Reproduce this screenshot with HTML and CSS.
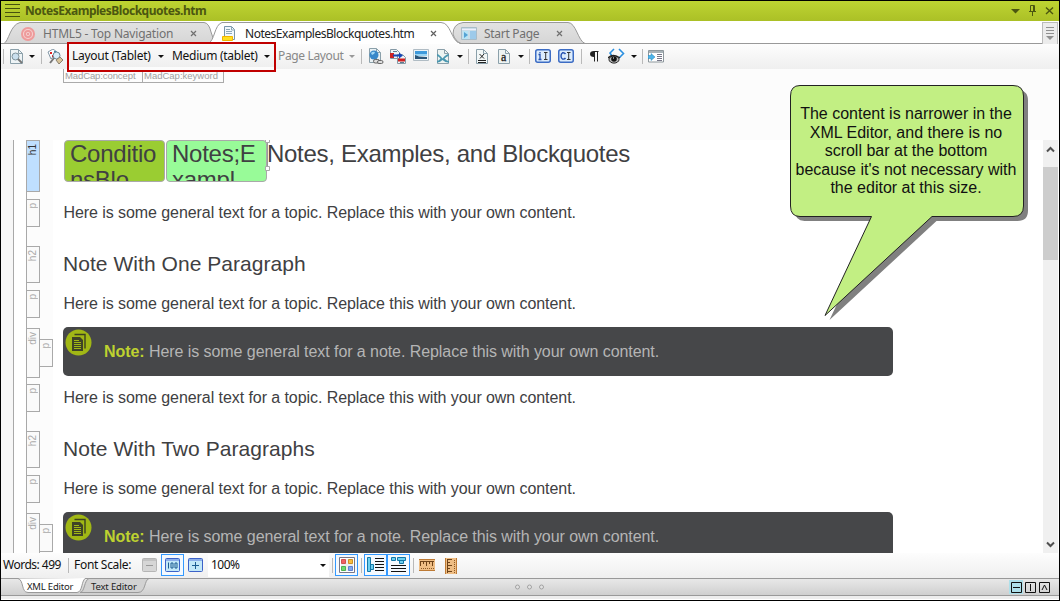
FILE: index.html
```html
<!DOCTYPE html>
<html lang="en">
<head>
<meta charset="utf-8">
<title>NotesExamplesBlockquotes.htm</title>
<link rel="stylesheet" href="styles.css">
</head>
<body>
<div class="window">
  <header class="titlebar">
    <svg class="grip" width="16" height="14"><path d="M0 .5h15M0 4.5h15M0 8.5h15M0 12.5h15" stroke="#46510e"/></svg>
    <span class="title">NotesExamplesBlockquotes.htm</span>
    <svg class="winbtns" width="44" height="14" fill="none" stroke="#4b5610"><path d="M0 5h9l-4.500 4.500z" fill="#4b5610" stroke="none"/><path d="M19.500 7.500V1.500h4v6M18 7.500h7M21.500 8v4M22.500 2v5" /><path d="M35 3.500l7 6.500M42 3.500L35 10" stroke-width="1.400"/></svg>
  </header>

  <nav class="tabs">
    <svg class="tabshapes" width="1058" height="23">
      <defs><linearGradient id="tg" x2="0" y2="1"><stop offset="0" stop-color="#e2e2e2"/><stop offset="1" stop-color="#d6d6d6"/></linearGradient></defs>
      <path d="M3 22.500C8 20 9 4 19 1.500H203Q208 2 210 11L214 22.500z" fill="url(#tg)" stroke="#999"/>
      <path d="M460 22.500Q454 20 452 13Q452 3 462 1.500H567C575 1.500 577 20 584 22.500z" fill="url(#tg)" stroke="#999"/>
      <path d="M0 22.500H207C214 20 213 4 221 1.500H440C450 1.500 450 20 459 22.500H1052" fill="#fff" stroke="#999"/>
      <path d="M208 22.500H458" stroke="#fff"/>
    </svg>
    <div class="tab tab-a">
      <svg width="14" height="14" fill="none" stroke="#ee9b9b" stroke-width="2"><circle cx="7" cy="7" r="6" fill="#f6d3d3"/><circle cx="7" cy="7" r="3"/><circle cx="7" cy="7" r="1" fill="#e98b8b" stroke="none"/></svg>
      <span class="t1">HTML5 - Top Navigation</span>
      <svg class="x" width="7" height="7"><path d="M1 1l5 5M6 1L1 6" stroke="#707070" stroke-width="1.200"/></svg>
    </div>
    <div class="tab tab-b">
      <svg width="14" height="16"><path d="M2.500.5h7l3 3v10h-10z" fill="#f2f8fc" stroke="#7795a8"/><path d="M4 3.500h4M4 5.500h6M4 7.500h6M9.500 1v3h3" stroke="#8ca8b8" fill="none"/><path d="M.5 10.500h10v4H.5z" fill="#ffe020" stroke="#f0b400"/></svg>
      <span class="t2">NotesExamplesBlockquotes.htm</span>
      <svg class="x" width="7" height="7"><path d="M1 1l5 5M6 1L1 6" stroke="#606060" stroke-width="1.200"/></svg>
    </div>
    <div class="tab tab-c">
      <svg width="16" height="13"><path d="M.5.5h15v12H.5z" fill="#cbdde8" stroke="#a9bcc8"/><path d="M1 2.500h14" stroke="#eef"/><path d="M9 4h6v8H9z" fill="#9dcaea"/><path d="M2 4h5v8H2z" fill="#b8e4f5"/><path d="M3 5v6l4-3z" fill="#56a3d4"/></svg>
      <span class="t3">Start Page</span>
      <svg class="x" width="7" height="7"><path d="M1 1l5 5M6 1L1 6" stroke="#707070" stroke-width="1.200"/></svg>
    </div>
    <div class="tablist"><svg width="9" height="14"><path d="M0 .5h8M0 3.500h8M0 6.500h8" stroke="#909090"/><path d="M0 9h8l-4 4z" fill="#909090"/></svg></div>
  </nav>

  <div class="toolbar">
    <i class="sep s1"></i>
    <svg class="ic i-preview" width="14" height="16"><path d="M.5.5h8l4 4v10H.5z" fill="#eef4f6" stroke="#8ba0aa"/><path d="M8.500.5v4h4" fill="none" stroke="#8ba0aa"/><circle cx="5.500" cy="7.500" r="3.500" fill="#c9dfee" stroke="#7e929c"/><path d="M8 10l4 4" stroke="#777" stroke-width="2"/></svg>
    <b class="arr a1"></b>
    <i class="sep s2"></i>
    <svg class="ic i-tags" width="17" height="16"><path d="M1 3l5-3 4 3-6 7z" fill="#fff" stroke="#8296a5"/><path d="M3 3h2v2H3zM5 6h2v2H5z" fill="#d22"/><path d="M7 2h2v3H7z" fill="#48a"/><circle cx="9.500" cy="6.500" r="3.500" fill="#d8edf8" stroke="#6b8798"/><path d="M7 9l-4 5" stroke="#777" stroke-width="2"/><path d="M9 11l4-3 3 3-4 4z" fill="#d8c49a" stroke="#8a8070"/></svg>
    <div class="redbox">
      <span class="l1">Layout (Tablet)</span><b class="arr a2"></b>
      <span class="l2">Medium (tablet)</span><b class="arr a3"></b>
    </div>
    <span class="l3">Page Layout</span><b class="arr dim a4"></b>
    <i class="sep s3"></i>
    <svg class="ic i-link" width="16" height="17"><path d="M1.500.5h7l4 4v10h-11z" fill="#e9f1f4" stroke="#8ba0aa"/><path d="M8.500.5v4h4" fill="none" stroke="#8ba0aa"/><circle cx="6" cy="7" r="4.500" fill="#3787c9"/><path d="M3 5q2-2 4-1 0 2-3 3z" fill="#9fd6f5"/><g fill="#ddd" stroke="#666"><rect x="5.500" y="11.500" width="6" height="3.500" rx="1.700"/><rect x="9.500" y="12.500" width="5.500" height="3" rx="1.500"/></g></svg>
    <svg class="ic i-xref" width="17" height="16"><path d="M.5.5h6l3 3v6h-9zM7.500 5.500h5l3 3v6h-8z" fill="#edf3f6" stroke="#8499a5"/><path d="M0 4h4v5H0z" fill="#c22"/><path d="M3 2.500h4M10 13.500h4" stroke="#5d7c90"/><path d="M3 5.500h6V3.500l4 3-4 3V7.500H3z" fill="#1747b5"/><path d="M8 9.500h7v3H8z" fill="#d02020"/></svg>
    <svg class="ic i-img" width="16" height="12"><path d="M.5.5h15v11H.5z" fill="#eef3f6" stroke="#b0bcc4"/><path d="M2 2h12v3H2z" fill="#3f9adb"/><path d="M2 5h12v2H2z" fill="#9ad4f4"/><path d="M2 6l4 1.500 8 .5v2H2z" fill="#2b5578"/></svg>
    <svg class="ic i-var" width="14" height="16"><path d="M1.500.5h7l4 4v10h-11z" fill="#edf4f2" stroke="#8ba0aa"/><path d="M8.500.5v4h4" fill="none" stroke="#8ba0aa"/><path d="M1 5q2 0 5.500 4.500Q10 5 13 5l-.5 2Q11 7 8.500 9.500 11 12 13 12v1.500Q10 14 6.500 11 3 14 1 13.500V12q2-.5 3.500-2.500Q2.500 7 1 7z" fill="#4a97b0"/></svg>
    <b class="arr a5"></b>
    <i class="sep s4"></i>
    <svg class="ic i-x" width="13" height="16"><path d="M.5.5h7l4 4v10H.5z" fill="#f2f7f7" stroke="#8ba0aa"/><path d="M7.500.5v4h4" fill="none" stroke="#8ba0aa"/><path d="M3.500 5l4.500 4.500M8 5L4 9.500M2 11.500h8M2 13.500h8" stroke="#222"/></svg>
    <svg class="ic i-a" width="13" height="16"><path d="M.5.5h7l4 4v10H.5z" fill="#edf3f3" stroke="#8ba0aa"/><path d="M7.500.5v4h4" fill="none" stroke="#8ba0aa"/><text class="glyph-a" x="3" y="12">a</text></svg>
    <b class="arr a6"></b>
    <i class="sep s5"></i>
    <svg class="ic i-ii" width="16" height="14"><rect x=".75" y=".75" width="14.500" height="12.500" rx="2" fill="#dcecfc" stroke="#3c6cc4" stroke-width="1.500"/><path d="M5 3v1.200M3.500 5.500h1.500v5M3.500 10.500h3" stroke="#2450b0" fill="none" stroke-width="1.300"/><path d="M9 3.500h3.500M10.700 3.500v7M9 10.500h3.500" stroke="#333"/></svg>
    <svg class="ic i-ci" width="16" height="14"><rect x=".75" y=".75" width="14.500" height="12.500" rx="2" fill="#dcecfc" stroke="#3c6cc4" stroke-width="1.500"/><path d="M7.500 5q-1-1.500-3-1.200Q3 4.500 3 7t1.500 3q2 .5 3-1" stroke="#2450b0" stroke-width="1.400" fill="none"/><path d="M9 3.500h3.500M10.700 3.500v7M9 10.500h3.500" stroke="#333"/></svg>
    <i class="sep s6"></i>
    <svg class="ic i-para" width="9" height="11"><path d="M4 6Q0 6 0 3T4 0H8.500V1H8V10.500H7V1H5V10.500H4z" fill="#222"/></svg>
    <svg class="ic i-eye" width="17" height="17"><path d="M6 1L2 5l2 3M11 1l4.500 4.500L11 10" fill="none" stroke="#2a8fe0" stroke-width="1.600"/><path d="M0 10q5-5 12 0" fill="none" stroke="#222" stroke-width="1.300"/><ellipse cx="6" cy="11.500" rx="5" ry="3.600" fill="#bbb" stroke="#222"/><circle cx="6" cy="11" r="2.800" fill="#111"/><path d="M5 10h1" stroke="#fff"/></svg>
    <b class="arr a7"></b>
    <i class="sep s7"></i>
    <svg class="ic i-list" width="16" height="13"><path d="M.5.500h15v11.500H.5z" fill="#fff" stroke="#8d979c"/><path d="M1 2h14" stroke="#a8b2b7" stroke-width="2"/><path d="M9 4.500h5M9 6.500h5M9 8.500h5M9 10.500h5" stroke="#778"/><path d="M0 5.500h3V3.500l4 3.500-4 3.500V8.500H0z" fill="#4db4ea" stroke="#2382b5" stroke-width=".5"/></svg>
  </div>

  <div class="headpane"><span class="mc mc1">MadCap:concept</span><span class="mc mc2">MadCap:keyword</span></div>

  <main class="editor">
    <div class="rail"></div>
    <div class="structure">
      <div class="bar h1bar"><span>h1</span></div>
      <div class="bar pbar after-h"><span>p</span></div>
      <div class="bar hbar"><span>h2</span></div>
      <div class="bar pbar after-h"><span>p</span></div>
      <div class="divrow"><div class="bar dbar"><span>div</span></div><div class="bar pbar nested"><span>p</span></div></div>
      <div class="bar pbar after-d"><span>p</span></div>
      <div class="bar hbar"><span>h2</span></div>
      <div class="bar pbar after-h"><span>p</span></div>
      <div class="divrow"><div class="bar dbar"><span>div</span></div><div class="bar pbar nested"><span>p</span></div></div>
    </div>
    <article class="content">
      <div class="h1row">
        <div class="chip chip1">Conditio<br>nsBlo</div>
        <div class="chip chip2">Notes;E<br>xampl</div>
        <svg class="bracket" width="5" height="31"><path d="M2.500 2v26" stroke="#999"/><path d="M.5-1.500h4v4h-4zM.5 26.500h4v4h-4z" fill="#fff" stroke="#a9a9a9"/></svg>
        <h1>Notes, Examples, and Blockquotes</h1>
      </div>
      <p class="para p1"><span>Here is some general text for a topic. Replace this with your own content.</span></p>
      <h2 class="ha"><span>Note With One Paragraph</span></h2>
      <p class="para p2"><span>Here is some general text for a topic. Replace this with your own content.</span></p>
      <div class="note">
        <svg class="noteicon" width="27" height="27"><circle cx="13.500" cy="13.500" r="13" fill="#a1b715"/><path d="M9.500 5.500h10.500v14" fill="none" stroke="#3c4120" stroke-width="1.400"/><path d="M7 8h8l3 3v11H7z" fill="#3f4326"/><path d="M9 11.500h5M9 13.500h7M9 15.500h7M9 17.500h7M9 19.500h7" stroke="#a1b715"/></svg>
        <p><b>Note:</b> Here is some general text for a note. Replace this with your own content.</p>
      </div>
      <p class="para p3"><span>Here is some general text for a topic. Replace this with your own content.</span></p>
      <h2 class="hb"><span>Note With Two Paragraphs</span></h2>
      <p class="para p2"><span>Here is some general text for a topic. Replace this with your own content.</span></p>
      <div class="note cut">
        <svg class="noteicon" width="27" height="27"><circle cx="13.500" cy="13.500" r="13" fill="#a1b715"/><path d="M9.500 5.500h10.500v14" fill="none" stroke="#3c4120" stroke-width="1.400"/><path d="M7 8h8l3 3v11H7z" fill="#3f4326"/><path d="M9 11.500h5M9 13.500h7M9 15.500h7M9 17.500h7M9 19.500h7" stroke="#a1b715"/></svg>
        <p><b>Note:</b> Here is some general text for a note. Replace this with your own content.</p>
      </div>
    </article>
    <div class="scroll">
      <svg width="9" height="7"><path d="M1 5.500l3.500-3.500 3.500 3.500" fill="none" stroke="#505050" stroke-width="2"/></svg>
      <div class="thumb"></div>
      <svg class="down" width="9" height="7"><path d="M1 1.500l3.500 3.500 3.500-3.500" fill="none" stroke="#505050" stroke-width="2"/></svg>
    </div>
  </main>

  <div class="status">
    <span class="w1">Words: 499</span><i class="sep q1"></i><span class="w2">Font Scale:</span>
    <svg class="q2" width="15" height="14"><rect x=".5" y=".5" width="14" height="13" rx="1" fill="#d6d6d6" stroke="#b5b5b5"/><path d="M1 2h13" stroke="#c2c2c2" stroke-width="2"/><path d="M4 7.500h7" stroke="#999"/></svg>
    <span class="on q3"><svg width="15" height="14"><rect x=".5" y=".5" width="14" height="13" rx="1" fill="#c2e8f8" stroke="#3c62c8"/><path d="M1 2h13" stroke="#8caee8" stroke-width="2"/><path d="M3.500 4.500v6M6 5h2v5H6zM10 5h2v5h-2z" stroke="#1c5c90" fill="none"/></svg></span>
    <svg class="q4" width="15" height="14"><rect x=".5" y=".5" width="14" height="13" rx="1" fill="#c2e8f8" stroke="#3c62c8"/><path d="M1 2h13" stroke="#8caee8" stroke-width="2"/><path d="M4 7.500h7M7.500 4v7" stroke="#1c5c90"/></svg>
    <span class="combo"><span>100%</span><b class="arr"></b></span>
    <i class="sep q5"></i>
    <span class="on q6"><svg width="16" height="16"><path d="M.5.5h15v15H.5z" fill="#fff" stroke="#778"/><path d="M2 2h12v12H2z" fill="#eee"/><path d="M2.500 2.500h4v4h-4z" fill="#f06060" stroke="#d05050"/><path d="M9.500 2.500h4v4h-4z" fill="#f8bd40" stroke="#d09020"/><path d="M2.500 9.500h4v4h-4z" fill="#70d870" stroke="#50b050"/><path d="M9.500 9.500h4v4h-4z" fill="#80a8f0" stroke="#6080d0"/></svg></span>
    <i class="sep q7"></i>
    <span class="on q8"><svg width="18" height="16"><path d="M.5.5h3v14h-3zM3.500 7.500h3v5h-3z" fill="#6fd0f0" stroke="#1378a8"/><path d="M8 1.500h9M8 4.500h9M8 7.500h9M8 10.500h9M8 13.500h9" stroke="#111"/></svg></span>
    <span class="on q9"><svg width="16" height="16"><path d="M.5.5h4v3h-4zM6.500.5h8v3h-8zM8.500 3.500h4v3h-4z" fill="#6fd0f0" stroke="#1378a8"/><path d="M0 8.500h15M0 11.500h15M0 14.500h15" stroke="#111"/></svg></span>
    <i class="sep q10"></i>
    <svg class="q11" width="16" height="12"><path d="M0 0h16v12H0z" fill="#eebd84"/><path d="M0 .5h16M0 11.500h16" stroke="#bd7a35"/><path d="M1.500 3v4M4.500 3v2M7.500 3v4M10.500 3v2M13.500 3v4M1 2.500h14" stroke="#6d4218"/><path d="M2 9.500h13" stroke="#8d5a26" stroke-dasharray="1 1"/></svg>
    <svg class="q12" width="12" height="16"><path d="M0 0h12v16H0z" fill="#eebd84"/><path d="M.5 0v16M11.500 0v16" stroke="#bd7a35"/><path d="M3 1.500h4M3 4.500h2M3 7.500h4M3 10.500h2M3 13.500h4M2.500 1v14" stroke="#6d4218"/><path d="M9.500 2v13" stroke="#8d5a26" stroke-dasharray="1 1"/></svg>
  </div>

  <footer class="foot">
    <svg class="footshapes" width="150" height="18">
      <path d="M79 14.500C84 14 83 2 88 .5H148C143 2 145 14.500 137 14.500z" fill="#d2d2d2" stroke="#999"/>
      <path d="M17 .5C23 2 20 14.500 27 14.500H76C82 14 80 2 85 0" fill="#fff" stroke="#999"/>
    </svg>
    <span class="f1">XML Editor</span><span class="f2">Text Editor</span>
    <svg class="dots" width="30" height="6" fill="#e2e2e2" stroke="#a2a2a2"><circle cx="2.500" cy="3" r="2"/><circle cx="14.500" cy="3" r="2"/><circle cx="26.500" cy="3" r="2"/></svg>
    <svg class="split" width="41" height="14" fill="none" stroke="#111"><path d="M0 0h14v14H0z" fill="#aee0ea" stroke="none"/><path d="M2.500 2.500h10v10h-10zM4 7.500h7M16.500 2.500h10v10h-10zM21.500 4v7M30.500 2.500h10v10h-10zM33 10l2.500-5 2.500 5"/></svg>
  </footer>

  <aside class="callout">
    <svg class="bubble" width="240" height="240">
      <path d="M10 .5H223Q233.500.5 233.500 11V121Q233.500 131.500 223 131.500H142L35 230.500 81.500 131.500H10Q.5 131.500.5 121V11Q.5.5 10 .5z" transform="translate(4.500 4.500)" fill="#808080"/>
      <path d="M10 .5H223Q233.500.5 233.500 11V121Q233.500 131.500 223 131.500H142L35 230.500 81.500 131.500H10Q.5 131.500.5 121V11Q.5.5 10 .5z" fill="#c2ef83" stroke="#222"/>
    </svg>
    <p>The content is narrower in the<br>XML Editor, and there is no<br>scroll bar at the bottom<br>because it's not necessary with<br>the editor at this size.</p>
  </aside>
</div>
</body>
</html>
```

FILE: styles.css
```css
* { box-sizing: border-box; margin: 0; padding: 0; }
body { width: 1060px; height: 601px; overflow: hidden; font-family: "Noto Sans", "Open Sans", sans-serif; }
svg { display: block; flex: none; }
span { white-space: nowrap; }
.window { position: relative; width: 1060px; height: 601px; border: 1px solid #000; display: flex; flex-direction: column; background: #fff; }

.titlebar { height: 20px; flex: none; display: flex; align-items: center; padding-left: 4px; background: linear-gradient(#bed432, #abc026); }
.title { margin-left: 4px; width: 900px; font-size: 12px; font-weight: 700; line-height: 18px; letter-spacing: -.48px; color: #4b5610; padding-bottom: 1px; }
.winbtns { margin-left: auto; margin-right: 4px; }

.tabs { position: relative; height: 23px; flex: none; display: flex; background: #fff; }
.tabshapes { position: absolute; left: 0; top: 0; }
.tab { position: relative; display: flex; align-items: center; font-size: 12px; line-height: 23px; padding-top: 2px; color: #707070; }
.tab-a { width: 205px; padding-left: 20px; }
.tab-b { width: 246px; padding-left: 16px; color: #222; }
.tab-c { width: 120px; padding-left: 9px; }
.t1 { margin-left: 8px; width: 144px; letter-spacing: -.2px; }
.t2 { margin-left: 9px; width: 182px; letter-spacing: -.48px; }
.t3 { margin-left: 7px; width: 69px; letter-spacing: -.3px; }
.x { margin-left: 3px; }
.tablist { margin-left: auto; margin-right: 1px; margin-top: 1px; width: 16px; display: flex; justify-content: center; align-items: center; border: 1px solid #bbb; border-bottom: 0; background: #ececec; position: relative; }

.toolbar { height: 25px; flex: none; display: flex; align-items: center; background: linear-gradient(#fdfdfd, #efefef); font-size: 12px; color: #111; }
.toolbar span { line-height: 16px; padding-bottom: 2px; }
.sep { width: 1px; height: 15px; flex: none; background: #b9b9b9; }
.arr { flex: none; width: 0; height: 0; border: 3px solid transparent; border-top-color: #111; border-bottom: 0; }
.dim { border-top-color: #999; }
.s1 { margin-left: 2px; } .i-preview { margin-left: 6px; } .a1 { margin-left: 5px; } .s2 { margin-left: 6px; }
.i-tags { margin-left: 5px; }
.redbox { margin-left: 3px; width: 209px; height: 30px; flex: none; display: flex; align-items: center; border: 2px solid #c00000; position: relative; padding-left: 3px; background: linear-gradient(#fbfbfb, #efefef 90%, #fcfcfc 90%); z-index: 1; }
.l1 { width: 84px; letter-spacing: -.26px; } .a2 { margin-left: 2px; }
.l2 { margin-left: 8px; width: 88px; letter-spacing: -.28px; } .a3 { margin-left: 4px; }
.l3 { margin-left: 2px; width: 71px; letter-spacing: -.35px; color: #888; } .s3 { margin-left: 6px; }
.i-link { margin-left: 6px; } .i-xref { margin-left: 6px; } .i-img { margin-left: 6px; margin-bottom: 3px; } .i-var { margin-left: 7px; } .a5 { margin-left: 7px; }
.s4 { margin-left: 5px; } .i-x { margin-left: 7px; } .i-a { margin-left: 9px; } .a6 { margin-left: 7px; } .s5 { margin-left: 5px; }
.glyph-a { font: 12px "Liberation Serif", serif; fill: #222; stroke: #222; stroke-width: .3px; }
.i-ii { margin-left: 5px; margin-bottom: 2px; } .i-ci { margin-left: 7px; margin-bottom: 2px; } .s6 { margin-left: 7px; }
.i-para { margin-left: 8px; } .i-eye { margin-left: 9px; } .a7 { margin-left: 6px; } .s7 { margin-left: 5px; } .i-list { margin-left: 5px; }

.headpane { height: 71px; flex: none; display: flex; align-items: flex-start; padding-left: 62px; background: #fcfcfc; }
.mc { height: 14px; border: 1px solid #aaa; border-top: 0; padding: 1px 0 0 1px; font: 9.500px/12px "Liberation Sans", Arial, sans-serif; color: #a0a0a0; }
.mc1 { width: 80px; letter-spacing: -.1px; } .mc2 { width: 82px; border-left: 1px solid #aaa; margin-left: -1px; }

.editor { height: 413px; flex: none; display: flex; overflow: hidden; font-family: "Liberation Sans", Arial, sans-serif; color: #404042; }
.rail { width: 13px; background: #f7f7f7; border-right: 1px solid #a9a9a9; }
.structure { width: 27px; flex: none; margin-left: 12px; border-left: 1px solid #a9a9a9; background: #fcfcfc; }
.bar { width: 14px; margin-left: -1px; border: 1px solid #a9a9a9; background: #fafafa; font-size: 10px; color: #aaa; display: flex; justify-content: center; padding-top: 3px; }
.bar span { writing-mode: vertical-rl; transform: rotate(180deg); line-height: 12px; align-self: flex-start; }
.h1bar { height: 52px; background: #bfdfff; color: #333; }
.pbar { height: 28px; }
.hbar { height: 37px; margin-top: 19px; }
.after-h { margin-top: 7px; }
.after-d { margin-top: 6px; }
.divrow { display: flex; margin-top: 10px; }
.dbar { height: 50px; flex: none; }
.nested { margin-top: 11px; flex: none; }

.content { width: 990px; flex: none; padding-left: 10px; background: #fff; }
.h1row { height: 42px; display: flex; padding-left: 1px; }
.chip { width: 101px; height: 42px; flex: none; overflow: hidden; border: 1px solid #a9a9a9; border-radius: 4px; padding-left: 5px; font-size: 24px; line-height: 27px; letter-spacing: -.25px; }
.chip1 { background: #9acd32; }
.chip2 { background: #98fb98; margin-left: 1px; }
.chip { text-indent: 0; line-height: 26px; }
.bracket { margin-left: -2px; }
h1 { margin-left: -3px; font-size: 24px; line-height: 28px; font-weight: 400; white-space: nowrap; letter-spacing: -.29px; }
.para { font-size: 16px; line-height: 20px; white-space: nowrap; letter-spacing: -.07px; padding-left: .5px; }
.p1 { margin-top: 21px; }
.p2 { margin-top: 18px; }
.p3 { margin-top: 12px; }
h2 { font-size: 21px; line-height: 24px; font-weight: 400; white-space: nowrap; letter-spacing: .05px; }
.ha { margin-top: 29px; }
.hb { margin-top: 29px; }
.note { width: 830px; height: 49px; margin-top: 13px; display: flex; border-radius: 5px; background: #464749; font-size: 16px; letter-spacing: -.065px; color: #b5b5b5; }
.note p { margin-left: 12px; line-height: 49px; white-space: nowrap; }
.note b { color: #bed230; }
.noteicon { margin: 2px 0 0 2px; }
.scroll { width: 15px; flex: none; background: #f0f0f0; display: flex; flex-direction: column; align-items: center; padding-top: 6px; }
.thumb { width: 15px; height: 93px; margin-top: 14px; background: #cdcdcd; }
.down { margin-top: auto; margin-bottom: 5px; }

.status { height: 25px; flex: none; display: flex; align-items: center; background: linear-gradient(#fdfdfd, #efefef); font-size: 12px; color: #111; }
.status > * { flex: none; }
.w1, .w2, .combo span { line-height: 16px; padding-bottom: 2px; }
.w1 { margin-left: 2px; width: 65px; letter-spacing: -.5px; } .w2 { margin-left: 5px; width: 68px; letter-spacing: -.3px; }
.on { height: 22px; width: 23px; border: 1px solid #3399ff; background: #f4f9fe; display: flex; align-items: center; justify-content: center; }
.q2, .q4, .on { margin-bottom: 2px; }
.q3 { margin-left: 4px; } .q4 { margin-left: 4px; }
.combo { margin-left: 5px; width: 121px; height: 23px; background: #fff; display: flex; align-items: center; justify-content: space-between; padding: 0 3px; letter-spacing: -.5px; }
.q5 { margin-left: 3px; } .q6 { margin-left: 2px; } .q7 { margin-left: 3px; } .q8 { margin-left: 2px; } .q10 { margin-left: 3px; } .q11 { margin-left: 5px; margin-bottom: 2px; } .q12 { margin-left: 10px; }

.foot { position: relative; height: 21px; flex: none; display: flex; align-items: flex-start; border-top: 1px solid #999; background: linear-gradient(#e8e8e8, #cfcfcf 16px, #999 16px, #999 17px, #ededed 17px); font-size: 9.500px; line-height: 15px; color: #222; }
.footshapes { position: absolute; left: 0; top: -1px; }
.foot span { position: relative; }
.f1 { margin-left: 26px; width: 64px; letter-spacing: -.2px; }
.f2 { width: 100px; letter-spacing: -.15px; }
.dots { margin: 5px 0 0 324px; }
.split { margin: 1px 9px 0 auto; }

.callout { position: absolute; left: 788px; top: 84px; width: 240px; height: 240px; z-index: 2; }
.bubble { position: absolute; left: .5px; top: 0; overflow: visible; }
.callout p { position: relative; width: 234px; margin-top: 20px; text-align: center; font: 16px/18.600px "Liberation Sans", Arial, sans-serif; color: #111; white-space: nowrap; }
```
